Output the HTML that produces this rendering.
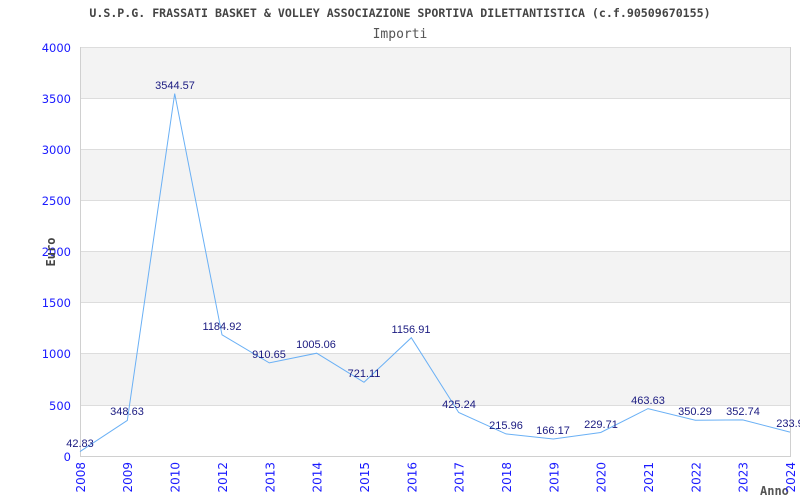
<!DOCTYPE html>
<html><head><meta charset="utf-8"><style>
html,body{margin:0;padding:0;background:#fff;width:800px;height:500px;overflow:hidden}
</style></head><body>
<svg width="800" height="500" xmlns="http://www.w3.org/2000/svg">
<rect x="0" y="0" width="800" height="500" fill="#fff"/>
<g fill="#f3f3f3">
<rect x="80.5" y="47" width="710" height="51"/>
<rect x="80.5" y="149" width="710" height="51"/>
<rect x="80.5" y="251" width="710" height="51"/>
<rect x="80.5" y="353" width="710" height="52"/>
</g>
<g stroke="#dddddd" stroke-width="1">
<line x1="80" y1="98.5" x2="790" y2="98.5"/>
<line x1="80" y1="149.5" x2="790" y2="149.5"/>
<line x1="80" y1="200.5" x2="790" y2="200.5"/>
<line x1="80" y1="251.5" x2="790" y2="251.5"/>
<line x1="80" y1="302.5" x2="790" y2="302.5"/>
<line x1="80" y1="353.5" x2="790" y2="353.5"/>
<line x1="80" y1="405.5" x2="790" y2="405.5"/>
<line x1="80" y1="47.5" x2="790" y2="47.5"/>
</g>
<polyline fill="none" stroke="#d0d0d0" points="80.5,47 80.5,456.5 790.5,456.5 790.5,47"/>
<text x="400" y="17" text-anchor="middle" font-family="'DejaVu Sans Mono','Liberation Mono',monospace" font-size="11.6" font-weight="bold" fill="#444">U.S.P.G. FRASSATI BASKET &amp; VOLLEY ASSOCIAZIONE SPORTIVA DILETTANTISTICA (c.f.90509670155)</text>
<text x="400" y="38" text-anchor="middle" font-family="'DejaVu Sans Mono','Liberation Mono',monospace" font-size="13" fill="#555">Importi</text>
<g font-family="'DejaVu Sans','Liberation Sans',sans-serif" font-size="11.5" fill="#1a1aff" text-anchor="end">
<text x="71" y="52">4000</text><text x="71" y="103">3500</text><text x="71" y="154">3000</text>
<text x="71" y="205">2500</text><text x="71" y="256">2000</text><text x="71" y="307">1500</text>
<text x="71" y="358">1000</text><text x="71" y="410">500</text><text x="71" y="461">0</text>
</g>
<text transform="translate(55,252) rotate(-90)" text-anchor="middle" font-family="'DejaVu Sans Mono',monospace" font-size="12" font-weight="bold" fill="#444">Euro</text>
<text x="760" y="495" font-family="'DejaVu Sans Mono',monospace" font-size="12" font-weight="bold" fill="#555">Anno</text>
<polyline fill="none" stroke="#6ab0f5" stroke-width="1" points="80,451.6 127.3,420.4 174.7,93.6 222,334.8 269.3,362.9 316.7,353.2 364,382.3 411.3,337.7 458.7,412.5 506,433.9 553.3,439 600.7,432.5 648,408.6 695.3,420.2 742.7,419.9 790,432.1"/>
<g font-family="'Liberation Sans',sans-serif" font-size="11" fill="#1a1a80" text-anchor="middle">
<text x="80" y="447">42.83</text><text x="127" y="415">348.63</text><text x="175" y="89">3544.57</text>
<text x="222" y="330">1184.92</text><text x="269" y="358">910.65</text><text x="316" y="348">1005.06</text>
<text x="364" y="377">721.11</text><text x="411" y="333">1156.91</text><text x="459" y="408">425.24</text>
<text x="506" y="429">215.96</text><text x="553" y="434">166.17</text><text x="601" y="428">229.71</text>
<text x="648" y="404">463.63</text><text x="695" y="415">350.29</text><text x="743" y="415">352.74</text>
<text x="790" y="427">233.9</text>
</g>
<g font-family="'DejaVu Sans','Liberation Sans',sans-serif" font-size="12" fill="#1a1aff" text-anchor="end">
<text transform="translate(85,462) rotate(-90)">2008</text>
<text transform="translate(132,462) rotate(-90)">2009</text>
<text transform="translate(179.7,462) rotate(-90)">2010</text>
<text transform="translate(227,462) rotate(-90)">2012</text>
<text transform="translate(274.3,462) rotate(-90)">2013</text>
<text transform="translate(321.7,462) rotate(-90)">2014</text>
<text transform="translate(369,462) rotate(-90)">2015</text>
<text transform="translate(416.3,462) rotate(-90)">2016</text>
<text transform="translate(463.7,462) rotate(-90)">2017</text>
<text transform="translate(511,462) rotate(-90)">2018</text>
<text transform="translate(558.3,462) rotate(-90)">2019</text>
<text transform="translate(605.7,462) rotate(-90)">2020</text>
<text transform="translate(653,462) rotate(-90)">2021</text>
<text transform="translate(700.3,462) rotate(-90)">2022</text>
<text transform="translate(747.7,462) rotate(-90)">2023</text>
<text transform="translate(795,462) rotate(-90)">2024</text>
</g>
</svg>
</body></html>
